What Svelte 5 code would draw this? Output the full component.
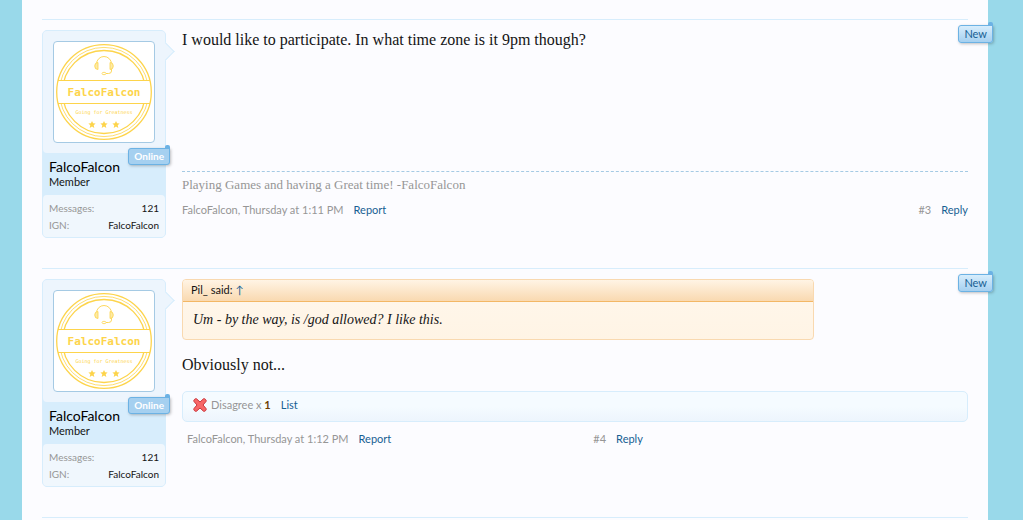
<script lang="ts">
  type Post = {
    id: number;
    time: string;
    text: string;
    quote?: { author: string; text: string };
    signature?: string;
    rating?: { label: string; count: number };
  };

  const user = { name: 'FalcoFalcon', title: 'Member', messages: 121, ign: 'FalcoFalcon' };

  const posts: Post[] = [
    {
      id: 3,
      time: 'Thursday at 1:11 PM',
      text: 'I would like to participate. In what time zone is it 9pm though?',
      signature: 'Playing Games and having a Great time! -FalcoFalcon'
    },
    {
      id: 4,
      time: 'Thursday at 1:12 PM',
      text: 'Obviously not...',
      quote: { author: 'Pil_', text: 'Um - by the way, is /god allowed? I like this.' },
      rating: { label: 'Disagree', count: 1 }
    }
  ];

  const stars = [38, 50, 62];
</script>

<main class="page">
  <ol class="messages">
    {#each posts as post (post.id)}
      <li class="message">
        <aside class="user">
          <div class="avatar-holder">
            <a class="avatar" href="#member" aria-label={user.name}>
              <svg viewBox="0 0 100 100" fill="none" stroke="#fdd44b">
                <circle cx="50" cy="50" r="44.6" stroke-width="0.8" />
                <circle cx="50" cy="50" r="41.500" stroke-width="1.3" />
                <path d="M4 38.500h92v23H4z" fill="#fff" stroke="none" />
                <path d="M4 38.500h92M4 61.500h92" />
                <circle cx="50" cy="50" r="47.300" stroke-width="1.3" />
                <path d="M42.5 23v-1a7.4 7.4 0 0 1 15 0v7q0 2.500-3 2.500h-2.500" stroke-width="0.9" />
                <path d="M44 20.500v7q-3.300 0-3.300-3.500t3.300-3.500zM56 20.500v7q3.300 0 3.300-3.500t-3.300-3.500z" fill="#fdeaa5" stroke-width="0.8" />
                <ellipse cx="50" cy="31.500" rx="2" ry="1.200" stroke-width="0.8" />
                <text class="logo-name" x="50" y="54" text-anchor="middle">FalcoFalcon</text>
                <text class="logo-motto" x="50" y="72" text-anchor="middle">Going for Greatness</text>
                {#each stars as x}
                  <path
                    transform="translate({x} 82.500)"
                    d="M0-3.600 1.100-1.200 3.600-1 1.700.8 2.300 3.400 0 2-2.300 3.400-1.700.8-3.600-1-1.100-1.200z"
                    fill="#fdd44b"
                    stroke="none"
                  />
                {/each}
              </svg>
            </a>
            <strong class="ribbon online">Online</strong>
          </div>
          <div class="user-text">
            <a class="username" href="#member">{user.name}</a>
            <em>{user.title}</em>
          </div>
          <dl class="stats">
            <div><dt>Messages:</dt><dd>{user.messages}</dd></div>
            <div><dt>IGN:</dt><dd>{user.ign}</dd></div>
          </dl>
          <span class="arrow"></span>
        </aside>

        <article class="body">
          <strong class="ribbon new">New</strong>
          <div class="content" class:tall={post.signature}>
            {#if post.quote}
              <blockquote class="quote">
                <div class="attribution">{post.quote.author} said: <a href="#quoted" aria-label="Go to quoted post">↑</a></div>
                <p>{post.quote.text}</p>
              </blockquote>
            {/if}
            <p class="text">{post.text}</p>
          </div>

          {#if post.signature}
            <div class="signature">{post.signature}</div>
          {/if}

          {#if post.rating}
            <div class="rating">
              <svg width="14" height="14" viewBox="0 0 14 14">
                <path
                  d="M3.500.8 7 4 10.500.8Q11.500.3 12.400 1.300 13.700 2.500 13 3.500L10 7l3 3.500q.7 1-.5 2.200-1 1-2 .5L7 10l-3.500 3.200q-1 .5-2-.5Q.3 11.500 1 10.500L4 7 1 3.500Q.3 2.500 1.600 1.300 2.500.3 3.500.8z"
                  fill="#f76767"
                  stroke="#c9353a"
                />
              </svg>
              <span>{post.rating.label} x <b>{post.rating.count}</b></span>
              <a href="#ratings">List</a>
            </div>
          {/if}

          <footer class="meta" class:narrow={post.rating}>
            <span><a class="muted" href="#member">{user.name}</a>, {post.time}</span>
            <a href="#report">Report</a>
            <a class="muted number" href="#post">#{post.id}</a>
            <a href="#reply">Reply</a>
          </footer>
        </article>
      </li>
    {/each}
  </ol>
</main>

<style>
  :global(body) {
    margin: 0;
    background: #99d9ea;
  }

  .page {
    box-sizing: border-box;
    min-height: 100vh;
    margin: 0 35px 0 22px;
    padding: 19px 20px 0;
    background: #fcfcff;
    color: #141414;
    font: 11px/16px "Trebuchet MS", Lato, sans-serif;
  }

  a {
    color: #176093;
    text-decoration: none;
  }

  p,
  dl,
  dd,
  ol,
  blockquote {
    margin: 0;
    padding: 0;
  }

  .messages {
    list-style: none;
    border-bottom: 1px solid #d7edfc;
  }

  .message {
    display: flex;
    align-items: flex-start;
    gap: 16px;
    padding: 10px 0 30px;
    border-top: 1px solid #d7edfc;
  }

  .user {
    position: relative;
    box-sizing: border-box;
    flex: 0 0 124px;
    border: 1px solid #d7edfc;
    border-radius: 5px;
    background: #d7edfc;
  }

  .avatar-holder {
    position: relative;
    padding: 10px;
    border-radius: 4px;
    background: #edf5fd;
  }

  .avatar {
    display: block;
    border: 1px solid #a5cae4;
    border-radius: 4px;
    background: #fff;
  }

  .avatar svg {
    display: block;
    width: 100%;
  }

  .logo-name,
  .logo-motto {
    fill: #fdd44b;
    stroke: none;
    font-family: "DejaVu Sans Mono", monospace;
    font-size: 11px;
    font-weight: bold;
  }

  .logo-motto {
    font-size: 5px;
    font-weight: normal;
  }

  .ribbon {
    position: absolute;
    box-sizing: border-box;
    padding: 0 5px;
    border: 1px solid #6cb2e4;
    border-radius: 3px 0 3px 3px;
    box-shadow: 1px 1px 3px rgba(0, 0, 0, 0.25);
    font-size: 11px;
  }

  .ribbon::after {
    content: '';
    position: absolute;
    top: -4px;
    right: -1px;
    width: 5px;
    height: 4px;
    border-radius: 2px 2px 0 0;
    background: #6cb2e4;
  }

  .online {
    right: -5px;
    bottom: -12px;
    background: #a5d0f0;
    color: #fff;
    font-size: 10px;
    line-height: 15px;
  }

  .new {
    top: -5px;
    right: -25px;
    background: linear-gradient(#d7edfc, #a5d0f0);
    color: #176093;
    font-weight: normal;
    line-height: 16px;
  }

  .user-text {
    padding: 6px;
  }

  .username {
    display: block;
    color: #000;
    font-size: 14px;
    line-height: 15px;
  }

  .user-text em {
    display: block;
    font-style: normal;
    line-height: 15px;
  }

  .stats {
    padding: 5px 6px 3px;
    border-radius: 4px;
    background: #f0f7fd;
    font-size: 10px;
    line-height: 17px;
  }

  .stats div {
    display: flex;
    justify-content: space-between;
  }

  dt {
    color: #969696;
  }

  .arrow {
    position: absolute;
    top: 14px;
    right: -7px;
    width: 12px;
    height: 12px;
    border: 1px solid #d7edfc;
    border-width: 1px 1px 0 0;
    background: #edf5fd;
    transform: rotate(45deg);
  }

  .body {
    position: relative;
    flex: 1;
    min-width: 0;
  }

  .content.tall {
    min-height: 141px;
  }

  .text,
  .quote p,
  .signature {
    font-family: Georgia, "Liberation Serif", serif;
  }

  .text {
    font-size: 16px;
    line-height: 20px;
  }

  .quote {
    box-sizing: border-box;
    width: 80.4%;
    margin-bottom: 15px;
    overflow: hidden;
    border: 1px solid #f9d9b0;
    border-radius: 4px;
    background: linear-gradient(#fff7ec, #fff4e5);
  }

  .attribution {
    padding: 2px 8px 3px;
    border-bottom: 1px solid #f3b765;
    background: linear-gradient(#fff4e5, #f9d9b0);
  }

  .quote p {
    padding: 8px 10px 9px;
    font-size: 14px;
    font-style: italic;
    line-height: 20px;
  }

  .signature {
    padding: 4px 0 8px;
    border-top: 1px dashed #a5cae4;
    color: #969696;
    font-size: 13px;
    line-height: 18px;
  }

  .rating {
    display: flex;
    align-items: center;
    gap: 4px;
    margin: 16px 0 9px;
    padding: 5px 10px 8px;
    border: 1px solid #d7edfc;
    border-radius: 5px;
    background: linear-gradient(#f5fbff 50%, #edf5fd);
    color: #969696;
  }

  .rating b {
    color: #6d3f03;
  }

  .rating a {
    margin-left: 6px;
  }

  .meta {
    display: flex;
    gap: 10px;
    color: #969696;
  }

  .meta.narrow {
    width: 58%;
    padding-left: 5px;
  }

  .muted {
    color: #969696;
  }

  .number {
    margin-left: auto;
  }
</style>
